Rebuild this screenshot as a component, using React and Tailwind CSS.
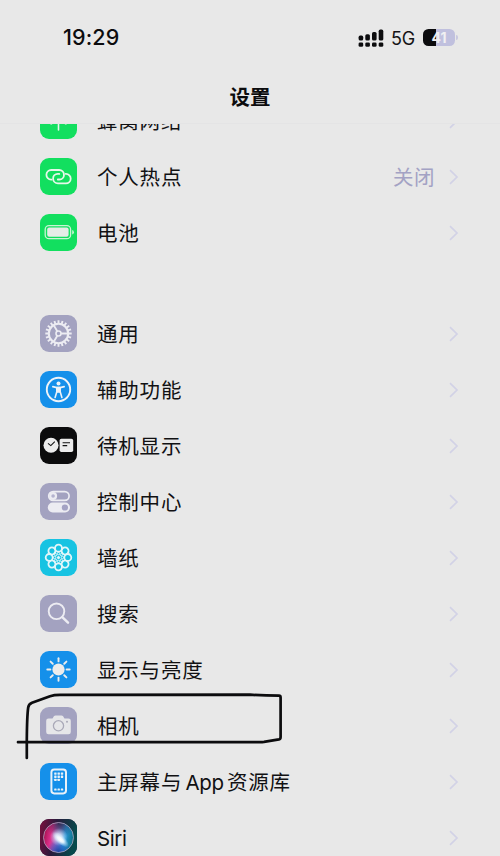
import clsx from 'clsx';

const CJK = "font-['Inter','Noto_Sans_CJK_SC',sans-serif]";

const petals = [0, 45, 90, 135, 180, 225, 270, 315];
const teeth = Array.from({ length: 20 }, (_, i) => i * 18);

function CellularIcon() {
    return (
        <g fill="none" stroke="#e8f5ea" strokeWidth="1.6" strokeLinecap="round">
            <path d="M18.5 14V28M11.5 11q-1.6 6.5 0 11.4l-1-1.6M25.5 11q1.6 6.5 0 11.4l1-1.6" />
            <circle cx="18.5" cy="13" r="2" fill="#e8f5ea" />
        </g>
    );
}

function HotspotIcon() {
    return (
        <g fill="none" stroke="#e6f7ea" strokeWidth="1.8" strokeLinecap="round">
            <path d="M11.6 21.6h-.5A4.8 4.8 0 0 1 11.3 12h7.9a4.9 4.9 0 0 1 4.8 4.9 4.6 4.6 0 0 1-4.6 4.6h-1.6" />
            <path d="M25.6 15.8h.4A4.8 4.8 0 0 1 25.8 25.4h-7.9a4.9 4.9 0 0 1-4.8-4.9 4.6 4.6 0 0 1 4.6-4.6h1.6" />
        </g>
    );
}

function BatteryIcon() {
    return (
        <g>
            <rect x="5.2" y="11.7" width="25.4" height="13" rx="3.8" fill="none" stroke="#c9f5d4" strokeWidth="1.3" />
            <rect x="7.2" y="13.6" width="21.4" height="9.2" rx="2" fill="#e6ece7" />
            <path d="M32.2 15.9a2.4 2.4 0 0 1 0 4.6z" fill="#c9f5d4" />
        </g>
    );
}

function GearIcon() {
    return (
        <g stroke="#ececf2" fill="none">
            {teeth.map((deg) => (
                <path key={deg} d="M18.5 5.3V8.6" strokeWidth="1.9" transform={`rotate(${deg} 18.5 18.5)`} />
            ))}
            <circle cx="18.5" cy="18.5" r="9.7" strokeWidth="2.1" />
            <circle cx="18.5" cy="18.5" r="2.5" strokeWidth="1.6" />
            <path d="M21 18.5H28M17.3 16.3 13.6 10M17.3 20.7 13.6 27" strokeWidth="1.8" />
        </g>
    );
}

function AccessibilityIcon() {
    return (
        <g fill="none" stroke="#eef3f8" strokeLinecap="round" strokeLinejoin="round">
            <circle cx="18.5" cy="18.5" r="11.7" strokeWidth="1.9" />
            <circle cx="18.5" cy="12.4" r="2" fill="#eef3f8" stroke="none" />
            <path d="M12.8 15.6 16.8 16.6H20.2L24.2 15.6" strokeWidth="1.6" />
            <path d="M16.9 16.6h3.2v4l1.8 5.8M16.9 16.6v4l-1.8 5.8" strokeWidth="1.6" />
            <path d="M16.9 16.6h3.2v4.6h-3.2z" fill="#eef3f8" strokeWidth="1" />
        </g>
    );
}

function StandbyIcon() {
    return (
        <g>
            <circle cx="11" cy="18.3" r="7.5" fill="#ececec" />
            <rect x="19.6" y="11.7" width="13.6" height="13.4" rx="1.8" fill="#ececec" />
            <path d="M8 16.4 10.8 18.6 14.8 14.6M22.6 15.8H30M22.6 18.6H27.2" fill="none" stroke="#111" strokeWidth="1.1" />
        </g>
    );
}

function ControlCenterIcon() {
    return (
        <g>
            <rect x="8.7" y="8.6" width="20.4" height="8.8" rx="4.4" fill="none" stroke="#ececf2" strokeWidth="1.7" />
            <circle cx="13.1" cy="13" r="4" fill="#ececf2" />
            <circle cx="13.1" cy="13" r="1.8" fill="#b4b3cf" />
            <rect x="7.8" y="19.6" width="22.2" height="9.8" rx="4.9" fill="#ececf2" />
            <circle cx="24.9" cy="24.5" r="3.1" fill="#a4a3c4" />
        </g>
    );
}

function WallpaperIcon() {
    return (
        <g fill="none" stroke="#e2f6f9">
            {petals.map((deg) => (
                <g key={deg} transform={`rotate(${deg} 18.5 18.5)`}>
                    <circle cx="18.5" cy="9.2" r="3.5" strokeWidth="1.8" />
                    <circle cx="18.5" cy="14.6" r="1.2" strokeWidth=".9" />
                </g>
            ))}
            <circle cx="18.5" cy="18.5" r="1.5" fill="#e2f6f9" stroke="none" />
        </g>
    );
}

function SearchIcon() {
    return (
        <g fill="none" stroke="#ececf2" strokeLinecap="round">
            <circle cx="16.5" cy="16.3" r="7.8" strokeWidth="1.9" />
            <path d="M22.3 22.1 28 27.6" strokeWidth="2.5" />
        </g>
    );
}

function BrightnessIcon() {
    return (
        <g>
            <circle cx="18.5" cy="18.5" r="6.1" fill="#ececec" />
            {petals.map((deg) => (
                <path
                    key={deg}
                    d="M18.5 7.3V10.4"
                    stroke="#ececec"
                    strokeWidth="1.9"
                    strokeLinecap="round"
                    transform={`rotate(${deg} 18.5 18.5)`}
                />
            ))}
        </g>
    );
}

function CameraIcon() {
    return (
        <g>
            <path
                d="M8.5 11.4h4l1.4-2.1q.6-.9 1.7-.9h5.8q1.1 0 1.7.9l1.4 2.1h4q2.3 0 2.3 2.3v11.2q0 2.3-2.3 2.3h-20q-2.3 0-2.3-2.3V13.7q0-2.3 2.3-2.3z"
                fill="#e6e6e9"
            />
            <circle cx="18.5" cy="18.8" r="5.1" fill="none" stroke="#aaa9b8" strokeWidth="1.3" />
            <circle cx="27" cy="14.8" r="1" fill="#aaa9b8" />
        </g>
    );
}

function HomeScreenIcon() {
    return (
        <g>
            <rect x="11.4" y="6.4" width="14.6" height="24" rx="2.8" fill="none" stroke="#e8f1f9" strokeWidth="2" />
            <g fill="#e8f1f9">
                {[0, 1, 2].map((row) =>
                    [0, 1, 2].map((col) =>
                        row === 2 && col === 2 ? null : (
                            <rect key={`${row}-${col}`} x={14.2 + col * 3.3} y={9.4 + row * 3.2} width="2.4" height="2.3" rx=".4" />
                        )
                    )
                )}
                {[0, 1, 2].map((col) => (
                    <rect key={col} x={14.2 + col * 3.3} y="25.6" width="2.4" height="2" rx=".4" />
                ))}
            </g>
        </g>
    );
}

function SiriIcon() {
    return (
        <g>
            <defs>
                <linearGradient id="siriBg" x1="0" y1="0" x2="1" y2="0.2">
                    <stop offset="0" stopColor="#7d0f3e" />
                    <stop offset=".45" stopColor="#2a1a3c" />
                    <stop offset="1" stopColor="#064a4c" />
                </linearGradient>
                <linearGradient id="siriOrb" x1="0" y1=".4" x2="1" y2=".6">
                    <stop offset="0" stopColor="#a3124e" />
                    <stop offset=".25" stopColor="#e0308c" />
                    <stop offset=".45" stopColor="#9a68c4" />
                    <stop offset=".68" stopColor="#2f9ae0" />
                    <stop offset="1" stopColor="#0a7080" />
                </linearGradient>
                <radialGradient id="siriShade" cx=".55" cy="0" r=".5">
                    <stop offset="0" stopColor="#1c2340" stopOpacity=".9" />
                    <stop offset=".4" stopColor="#1c2340" stopOpacity=".5" />
                    <stop offset="1" stopColor="#1c2340" stopOpacity="0" />
                </radialGradient>
                <radialGradient id="siriBlue" cx=".5" cy="1" r=".42">
                    <stop offset="0" stopColor="#1c3f9c" />
                    <stop offset="1" stopColor="#1c4fc4" stopOpacity="0" />
                </radialGradient>
                <radialGradient id="siriGlow">
                    <stop offset="0" stopColor="#fff" />
                    <stop offset=".35" stopColor="#f4fbff" stopOpacity=".9" />
                    <stop offset="1" stopColor="#bfe6ff" stopOpacity="0" />
                </radialGradient>
            </defs>
            <rect width="37" height="37" fill="url(#siriBg)" />
            <circle cx="18.5" cy="18.5" r="15" fill="url(#siriOrb)" />
            <circle cx="18.5" cy="18.5" r="15" fill="url(#siriShade)" />
            <circle cx="18.5" cy="18.5" r="15" fill="url(#siriBlue)" />
            <circle cx="18.8" cy="18" r="9" fill="url(#siriGlow)" fillOpacity=".75" />
            <ellipse cx="20.5" cy="20.5" rx="10.5" ry="4.5" fill="url(#siriGlow)" transform="rotate(42 20.5 20.5)" />
            <circle cx="18.5" cy="18.5" r="15" fill="none" stroke="#b4a8c4" strokeOpacity=".75" strokeWidth="1" />
        </g>
    );
}

const groups = [
    [
        { label: '蜂窝网络', icon: CellularIcon, bg: 'bg-[#12df5f]' },
        { label: '个人热点', icon: HotspotIcon, bg: 'bg-[#12df5f]', value: '关闭' },
        { label: '电池', icon: BatteryIcon, bg: 'bg-[#12df5f]' }
    ],
    [
        { label: '通用', icon: GearIcon, bg: 'bg-[#a3a2c0]' },
        { label: '辅助功能', icon: AccessibilityIcon, bg: 'bg-[#1590ea]' },
        { label: '待机显示', icon: StandbyIcon, bg: 'bg-[#0b0b0c]' },
        { label: '控制中心', icon: ControlCenterIcon, bg: 'bg-[#a3a2c0]' },
        { label: '墙纸', icon: WallpaperIcon, bg: 'bg-[#17c3e2]' },
        { label: '搜索', icon: SearchIcon, bg: 'bg-[#a3a2c0]' },
        { label: '显示与亮度', icon: BrightnessIcon, bg: 'bg-[#1590ea]' },
        { label: '相机', icon: CameraIcon, bg: 'bg-[#a3a2c0]', marked: true },
        { label: '主屏幕与 App 资源库', icon: HomeScreenIcon, bg: 'bg-[#1590ea]' },
        { label: 'Siri', icon: SiriIcon, bg: 'bg-[#2a1a3c]' }
    ]
];

function RowLabel({ label }) {
    // Latin words are set without the extra tracking used for Chinese
    return (
        <span className="flex-1 pt-[3.5px] text-[20.5px] leading-none tracking-[0.8px] whitespace-pre text-[#111113]">
            {label.split(/(\s?[A-Za-z]+\s?)/).map((part, i) =>
                /[A-Za-z]/.test(part) ? (
                    <span key={i} className="tracking-[-0.4px] text-[20.5px] [word-spacing:-2px]">{part}</span>
                ) : (
                    part
                )
            )}
        </span>
    );
}

function SettingsRow({ item }) {
    const Icon = item.icon;
    return (
        <li className="relative flex h-14 items-center pl-10 pr-[41px]">
            <span className={clsx('mr-5 size-[37px] shrink-0 overflow-hidden rounded-[9px]', item.bg)}>
                <svg viewBox="0 0 37 37" className="size-full">
                    <Icon />
                </svg>
            </span>
            <RowLabel label={item.label} />
            {item.value && (
                <span className="mr-[14px] pt-[3.5px] text-[20.5px] leading-none tracking-[0.5px] text-[#a3a2c4]">{item.value}</span>
            )}
            <svg viewBox="0 0 10 16" className="h-4 w-[10px] shrink-0">
                <path d="M1 1.2 8 8 1 14.8" fill="none" stroke="#d2d2e6" strokeWidth="1.7" />
            </svg>
            {item.marked && <MarkerStroke />}
        </li>
    );
}

function MarkerStroke() {
    return (
        <svg viewBox="0 0 290 72" className="absolute left-0 -top-2 z-10 h-[72px] w-[290px]">
            <path
                d="M26.8 68V50Q27 26 28.2 17.5Q28.6 14.2 32 12.8L50 6.2Q54 4.9 60 4.9L250 4.7Q264 5.7 279 5.7Q280.6 5.7 280.6 7.4V47Q280.6 49 279 49.4L264 51.8Q260 52.2 250 52.2H18"
                fill="none"
                stroke="#0c0c0e"
                strokeWidth="2.7"
                strokeLinecap="round"
                strokeLinejoin="round"
            />
        </svg>
    );
}

function StatusBar() {
    return (
        <div className="flex h-[75px] items-center justify-between pl-[63px] pr-[42px]">
            <span className="text-[21.5px] leading-none font-medium tracking-[0.1px] text-[#0c0c0e]">19:29</span>
            <div className="flex items-center">
                <svg viewBox="0 0 26 18" className="h-[18px] w-[26px]" fill="#0c0c0e">
                    {[6.6, 5.2, 3, 0.6].map((top, i) => (
                        <g key={top}>
                            <rect x={0.6 + i * 6.7} y={top} width="4.6" height={11.6 - top} rx="1.6" />
                            <rect x={0.6 + i * 6.7} y="13.4" width="4.6" height="4.4" rx="1.4" />
                        </g>
                    ))}
                </svg>
                <span className="ml-[7px] w-6 pt-[2px] text-[18px] leading-none tracking-[-0.3px] text-[#141416]">5G</span>
                <div className="ml-2 flex h-[17px] w-8 items-center justify-center rounded-[5.5px] bg-[linear-gradient(90deg,#0c0c0e_42%,#c0c0de_42%)] text-[14px] leading-none font-bold text-[#f0f0f2]">
                    41
                </div>
                <span className="ml-[1px] h-[5px] w-[2px] rounded-r-full bg-[#c8c8e0]" />
            </div>
        </div>
    );
}

export default function App() {
    return (
        <div className={clsx('flex h-[856px] w-[500px] flex-col overflow-hidden bg-[#e8e8e8]', CJK)}>
            <header className="h-[124px] shrink-0 border-b border-[#e4e4e5]">
                <StatusBar />
                <h1 className="pt-[13px] text-center text-[20.5px] leading-none font-semibold text-[#0c0c0e]">设置</h1>
            </header>
            <main className="min-h-0 flex-1 overflow-hidden">
                <div className="-mt-[31.5px] flex flex-col gap-[45px]">
                    {groups.map((items, i) => (
                        <ul key={i}>
                            {items.map((item) => (
                                <SettingsRow key={item.label} item={item} />
                            ))}
                        </ul>
                    ))}
                </div>
            </main>
        </div>
    );
}
